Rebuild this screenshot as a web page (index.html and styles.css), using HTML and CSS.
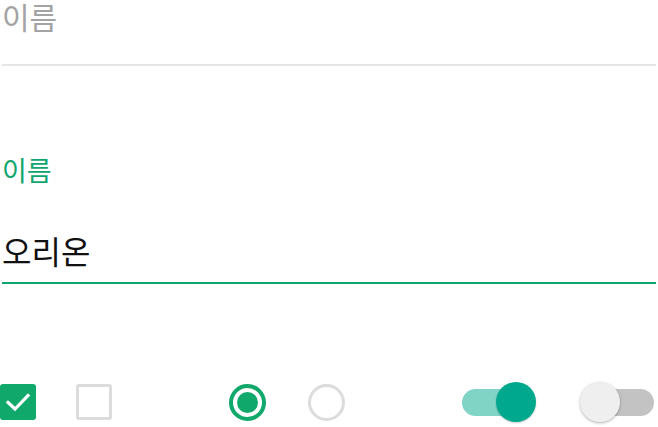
FILE: index.html
```html
<!DOCTYPE html>
<html lang="ko">
<head>
<meta charset="utf-8">
<link rel="stylesheet" href="styles.css">
</head>
<body>
<div class="page">
  <div class="field field-idle">
    <div class="placeholder">이름</div>
  </div>
  <div class="field field-active">
    <div class="label">이름</div>
    <div class="value">오리온</div>
  </div>
  <div class="controls">
    <div class="group group-check">
      <span class="checkbox checked">
        <svg viewBox="0 0 36 36" width="36" height="36"><path d="M8 18.5 L15 25 L28 11.5" fill="none" stroke="#fff" stroke-width="3.2" stroke-linecap="square"/></svg>
      </span>
      <span class="checkbox"></span>
    </div>
    <div class="group group-radio">
      <span class="radio checked"><span class="dot"></span></span>
      <span class="radio"></span>
    </div>
    <div class="group group-switch">
      <span class="switch on"><span class="track"></span><span class="thumb"></span></span>
      <span class="switch off"><span class="track"></span><span class="thumb"></span></span>
    </div>
  </div>
</div>
</body>
</html>
```
FILE: styles.css
```css
* { box-sizing: border-box; }
html, body { margin: 0; padding: 0; background: #fff; }
body { font-family: "Noto Sans CJK KR", "Noto Sans", sans-serif; width: 658px; height: 427px; overflow: hidden; }
.page { display: flex; flex-direction: column; padding: 0 2px; }

.field { border-bottom: 2px solid #e6e6e6; }
.field-idle { height: 66px; }
.placeholder { font-size: 30px; line-height: 32px; color: #a3a3a3; padding-left: 0; }

.field-active { border-bottom-color: #0fa56c; margin-top: 84px; height: 134px; }
.label { font-size: 27px; line-height: 32px; color: #0fa56c; padding-left: 0; margin-top: 4px; }
.value { font-size: 32px; line-height: 40px; color: #111; padding-left: 0; margin-top: 44px; }

.controls { display: flex; align-items: center; height: 40px; margin-top: 98px; margin-left: -2px; }
.group { display: flex; align-items: center; }
.group-check { gap: 40px; }
.group-radio { gap: 42px; margin-left: 117px; }
.group-switch { gap: 44px; margin-left: 117px; }

.checkbox { width: 36px; height: 36px; border-radius: 3px; border: 3px solid #dcdcdc; display: block; }
.checkbox.checked { background: #10a96b; border: none; }
.checkbox svg { display: block; }

.radio { width: 37px; height: 37px; border-radius: 50%; border: 3.5px solid #dcdcdc; display: flex; align-items: center; justify-content: center; }
.radio.checked { border: 4px solid #10a96b; }
.radio .dot { width: 21px; height: 21px; border-radius: 50%; background: #10a96b; }

.switch { position: relative; width: 74px; height: 40px; display: block; }
.switch .track { position: absolute; left: 0; right: 0; top: 7px; height: 27px; border-radius: 14px; }
.switch .thumb { position: absolute; top: 0; width: 40px; height: 40px; border-radius: 50%; }
.switch.on .track { background: #80d4c6; right: 10px; }
.switch.on .thumb { right: 0; background: #00a88d; box-shadow: 0 1px 2px rgba(0,0,0,0.2); }
.switch.off .track { background: #c3c3c3; left: 4px; }
.switch.off .thumb { left: 0; background: #efefef; box-shadow: 0 1px 3px rgba(0,0,0,0.3); }
```
